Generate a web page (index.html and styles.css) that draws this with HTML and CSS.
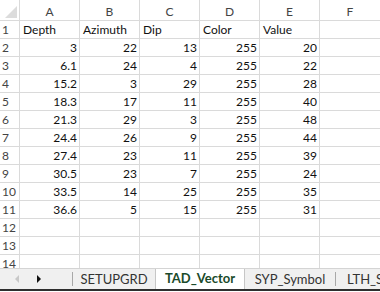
FILE: index.html
```html
<!DOCTYPE html>
<html lang="en">
<head>
    <meta charset="UTF-8">
    <title>TAD_Vector</title>
    <link rel="stylesheet" href="styles.css">
</head>
<body>
    <div class="sheet">
        <div class="row head">
            <div class="corner">
                <svg width="19" height="20" viewBox="0 0 19 20"><polygon points="17,6 17,18 5,18" fill="#dcdcdc"/></svg>
            </div>
            <div class="col-name">A</div><div class="col-name">B</div><div class="col-name">C</div>
            <div class="col-name">D</div><div class="col-name">E</div><div class="col-name">F</div>
        </div>
        <div class="row"><div class="num">1</div><div>Depth</div><div>Azimuth</div><div>Dip</div><div>Color</div><div>Value</div><div></div></div>
        <div class="row"><div class="num">2</div><div class="n">3</div><div class="n">22</div><div class="n">13</div><div class="n">255</div><div class="n">20</div><div></div></div>
        <div class="row"><div class="num">3</div><div class="n">6.1</div><div class="n">24</div><div class="n">4</div><div class="n">255</div><div class="n">22</div><div></div></div>
        <div class="row"><div class="num">4</div><div class="n">15.2</div><div class="n">3</div><div class="n">29</div><div class="n">255</div><div class="n">28</div><div></div></div>
        <div class="row"><div class="num">5</div><div class="n">18.3</div><div class="n">17</div><div class="n">11</div><div class="n">255</div><div class="n">40</div><div></div></div>
        <div class="row"><div class="num">6</div><div class="n">21.3</div><div class="n">29</div><div class="n">3</div><div class="n">255</div><div class="n">48</div><div></div></div>
        <div class="row"><div class="num">7</div><div class="n">24.4</div><div class="n">26</div><div class="n">9</div><div class="n">255</div><div class="n">44</div><div></div></div>
        <div class="row"><div class="num">8</div><div class="n">27.4</div><div class="n">23</div><div class="n">11</div><div class="n">255</div><div class="n">39</div><div></div></div>
        <div class="row"><div class="num">9</div><div class="n">30.5</div><div class="n">23</div><div class="n">7</div><div class="n">255</div><div class="n">24</div><div></div></div>
        <div class="row"><div class="num">10</div><div class="n">33.5</div><div class="n">14</div><div class="n">25</div><div class="n">255</div><div class="n">35</div><div></div></div>
        <div class="row"><div class="num">11</div><div class="n">36.6</div><div class="n">5</div><div class="n">15</div><div class="n">255</div><div class="n">31</div><div></div></div>
        <div class="row"><div class="num">12</div><div></div><div></div><div></div><div></div><div></div><div></div></div>
        <div class="row"><div class="num">13</div><div></div><div></div><div></div><div></div><div></div><div></div></div>
        <div class="row"><div class="num">14</div><div></div><div></div><div></div><div></div><div></div><div></div></div>
    </div>

    <nav class="tabs">
        <div class="tab-nav">
            <svg width="6" height="8" viewBox="0 0 6 8"><polygon points="5,0 5,8 1,4" fill="#c8c8c8"/></svg>
            <svg width="6" height="8" viewBox="0 0 6 8"><polygon points="1,0 1,8 5,4" fill="#111"/></svg>
        </div>
        <span class="tab-sep"></span>
        <div class="tab">SETUPGRD</div>
        <div class="tab active">TAD_Vector</div>
        <div class="tab">SYP_Symbol</div>
        <span class="tab-sep"></span>
        <div class="tab last">LTH_Symbol</div>
    </nav>
</body>
</html>
```

FILE: styles.css
```css
body {
  margin: 0;
  width: 380px;
  height: 292px;
  overflow: hidden;
  background: #fff;
  font-family: Lato, "Liberation Sans", sans-serif;
  font-size: 12px;
  color: #111;
}

.sheet {
  height: 268px;
  overflow: hidden;
  display: flex;
  flex-direction: column;
  gap: 1px;
  background: #dadada;
}

.row {
  display: grid;
  grid-template-columns: 19px repeat(5, 59px) 1fr;
  gap: 1px;
  height: 17px;
  flex: none;
}

.row > div {
  background: #fff;
  line-height: 17px;
  padding: 0 3px;
  white-space: nowrap;
  overflow: hidden;
}

.row > .n {
  text-align: right;
  padding-right: 2px;
}

.row > .num {
  color: #444;
  padding: 0 0 0 2px;
}

.head {
  height: 20px;
}

.head > div {
  padding-top: 3px;
}

.head > .corner {
  padding: 0;
}

.corner svg {
  display: block;
}

.col-name {
  text-align: center;
  color: #444;
}

.tabs {
  display: flex;
  align-items: stretch;
  height: 20px;
  background: #f0f0f0;
  border-top: 1px solid #d4d4d4;
  border-bottom: 2px solid #2e2e2e;
  overflow: hidden;
  white-space: nowrap;
  font-size: 13px;
}

.tabs > * {
  flex: none;
}

.tab-nav {
  width: 72px;
  display: flex;
  align-items: center;
  gap: 16px;
  padding-left: 14px;
  box-sizing: border-box;
}

.tab-nav svg {
  display: block;
}

.tab-sep {
  width: 1px;
  height: 14px;
  align-self: center;
  background: #a8a8a8;
}

.tab {
  width: 82px;
  text-align: center;
  line-height: 20px;
  color: #333;
}

.tab.active {
  width: 88px;
  margin-top: -1px;
  line-height: 21px;
  background: #fff;
  border-left: 1px solid #c6c6c6;
  border-right: 1px solid #c6c6c6;
  font-weight: bold;
  color: #1a4a2a;
}

.tab.active + .tab {
  width: 90px;
}

.tab.last {
  text-align: left;
  padding-left: 11px;
}
```
